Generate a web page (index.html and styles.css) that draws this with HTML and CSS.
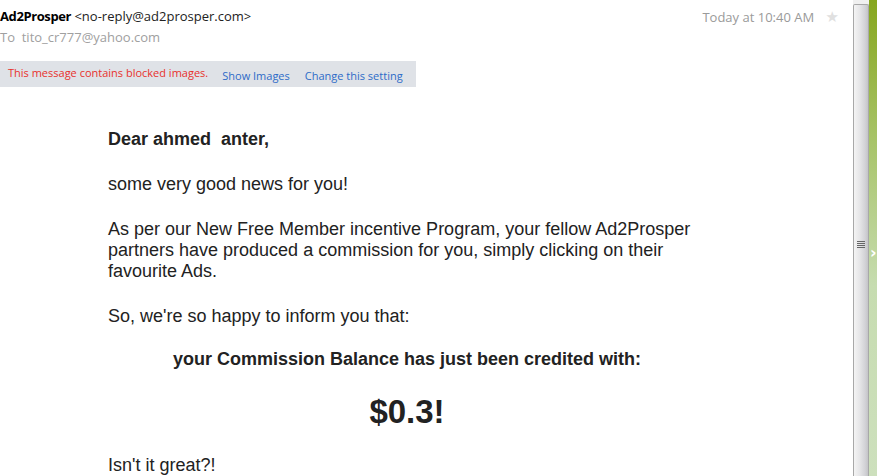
FILE: index.html
```html
<!DOCTYPE html>
<html>
  <head>
    <title>Ad2Prosper - Message</title>
    <meta charset="utf-8">
    <link rel="stylesheet" href="styles.css">
  </head>
  <body>
    <div class="window">
      <!-- (A) MESSAGE PANE -->
      <main class="pane">
        <header class="msg-head">
          <div class="from-row">
            <div class="from"><b>Ad2Prosper</b> &lt;no-reply@ad2prosper.com&gt;</div>
            <div class="date">Today at 10:40 AM <span class="star">&#9733;</span></div>
          </div>
          <div class="to">To&nbsp; tito_cr777@yahoo.com</div>
        </header>

        <div class="blocked">
          <span class="warn">This message contains blocked images.</span>
          <a class="link">Show Images</a>
          <a class="link">Change this setting</a>
        </div>

        <!-- (B) MAIL BODY -->
        <div class="mail">
          <p class="greet">Dear ahmed &nbsp;anter,</p>
          <p>some very good news for you!</p>
          <p>As per our New Free Member incentive Program, your fellow Ad2Prosper partners have produced a commission for you, simply clicking on their favourite Ads.</p>
          <p class="lead">So, we're so happy to inform you that:</p>
          <p class="credit">your Commission Balance has just been credited with:</p>
          <p class="amount">$0.3!</p>
          <p>Isn't it great?!</p>
        </div>
      </main>

      <!-- (C) SCROLLBAR + SIDE STRIP -->
      <div class="scroll">
        <div class="thumb"><span class="grip"></span></div>
      </div>
      <div class="side"><span class="chev">&#8250;</span></div>
    </div>
  </body>
</html>
```

FILE: styles.css
```css
* { box-sizing: border-box; }
html, body {
  margin: 0;
  height: 100%;
  overflow: hidden;
  background: #fff;
}
.window {
  display: flex;
  height: 476px;
}

/* (A) HEADER */
.pane {
  flex: 1;
  overflow: hidden;
}
.msg-head {
  font-family: "Open Sans", "DejaVu Sans", sans-serif;
  font-size: 13px;
  padding-top: 7px;
}
.from-row {
  display: flex;
  justify-content: space-between;
  height: 21px;
}
.from { color: #222; }
.from b { color: #000; letter-spacing: -0.4px; }
.date {
  color: #9a9a9a;
  padding-right: 14px;
  padding-top: 1px;
}
.star {
  color: #e0e0e0;
  font-size: 15px;
  margin-left: 8px;
  font-family: "DejaVu Sans", sans-serif;
}
.to { color: #a0a0a0; }

.blocked {
  margin-top: 15px;
  width: 416px;
  height: 26px;
  background: #dfe2e7;
  font-family: "Open Sans", "DejaVu Sans", sans-serif;
  font-size: 11px;
  display: flex;
  align-items: center;
  padding-left: 8px;
}
.warn { color: #e8312c; margin-top: -3px; }
.link { color: #2d6bc8; margin-left: 14px; margin-top: 2px; }
.link + .link { margin-left: 15px; }

/* (B) BODY */
.mail {
  margin: 42px 0 0 108px;
  width: 598px;
  font-family: "Liberation Sans", Arial, sans-serif;
  font-size: 18px;
  line-height: 21px;
  color: #222;
}
.mail p { margin: 0 0 24px; }
.greet { font-weight: bold; }
.mail .lead { margin-bottom: 22px; }
.mail .credit {
  font-weight: bold;
  text-align: center;
  margin-bottom: 23px;
}
.mail .amount {
  font-weight: bold;
  font-size: 33px;
  line-height: 37px;
  text-align: center;
  margin-bottom: 25px;
}

/* (C) SCROLLBAR */
.scroll {
  width: 16px;
  background: #f0f0f0;
  padding-top: 4px;
}
.thumb {
  height: 100%;
  border: 1px solid #a8a8a8;
  border-bottom: 0;
  border-radius: 2px 2px 0 0;
  background: linear-gradient(to right, #f4f4f4, #e6e6e8 40%, #d2d2d6 80%, #c4c4c8);
  display: flex;
  justify-content: center;
  padding-top: 236px;
}
.grip {
  width: 8px;
  height: 8px;
  background: repeating-linear-gradient(to bottom, #666 0 1px, transparent 1px 2px);
}
.side {
  width: 8px;
  background: linear-gradient(to bottom, #86a61e, #a8c46a 30%, #c6dcb0 60%, #cde0bd);
  position: relative;
}
.chev {
  position: absolute;
  top: 243px;
  left: 1px;
  color: #fff;
  font-family: "DejaVu Sans", sans-serif;
  font-size: 16px;
  font-weight: bold;
}
```
